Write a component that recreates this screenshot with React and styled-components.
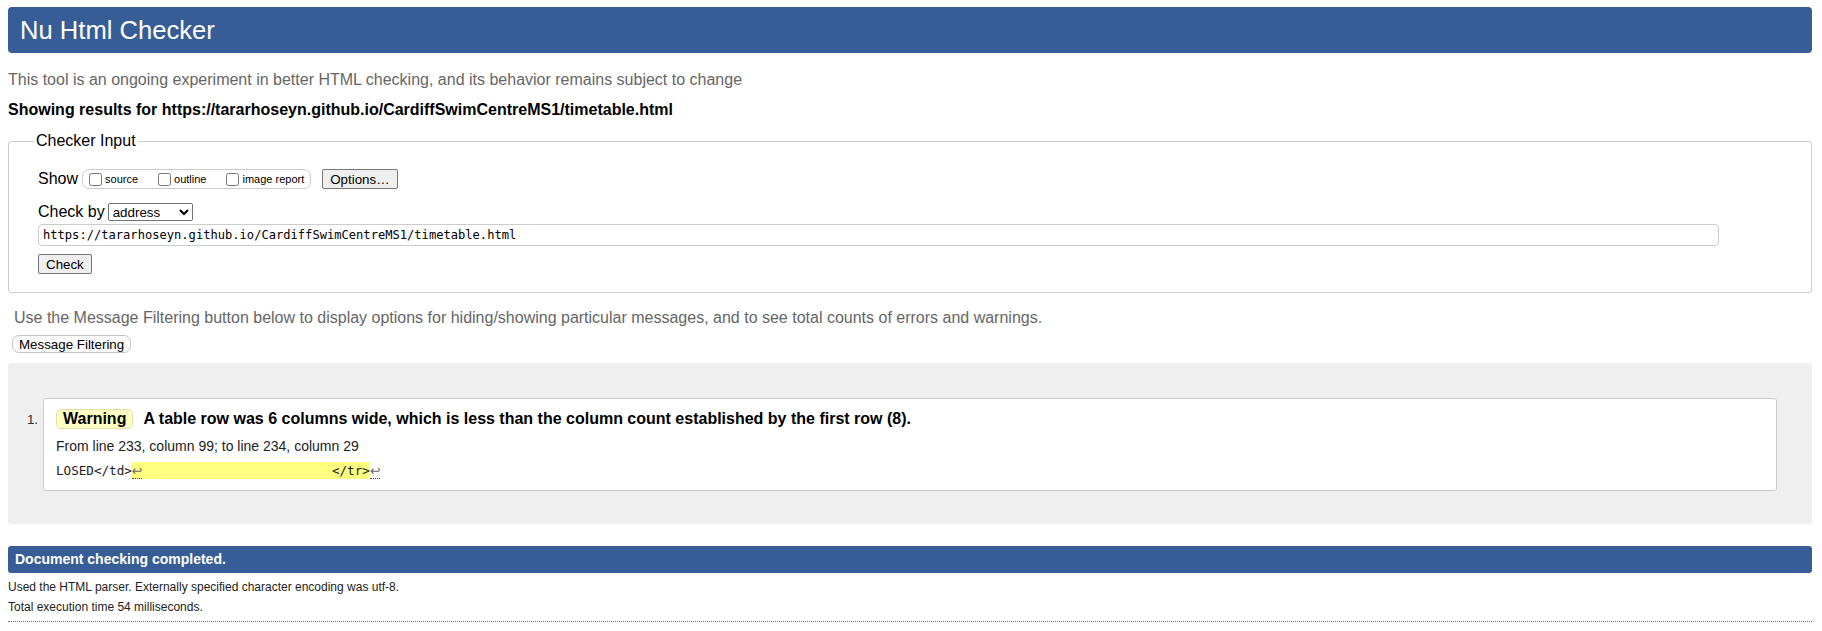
import React from 'react';
import styled, { createGlobalStyle } from 'styled-components';

const GlobalStyle = createGlobalStyle`
  html, body {
    margin: 0;
    padding: 0;
    background: #fff;
  }
  body {
    font-family: "Liberation Sans", Arial, sans-serif;
    color: #000;
  }
`;

const Page = styled.div`
  padding: 7px 10px 0 8px;
`;

const Header = styled.h1`
  margin: 0;
  height: 46px;
  line-height: 46px;
  padding-left: 12px;
  background: #365d95;
  border-radius: 4px;
  color: #fff;
  font-size: 25.6px;
  font-weight: normal;
`;

const Intro = styled.p`
  margin: 17px 0 0;
  line-height: 20px;
  font-size: 16px;
  color: #666;
`;

const Showing = styled.p`
  margin: 10px 0 0;
  line-height: 20px;
  font-size: 16px;
  font-weight: bold;
`;

const Fieldset = styled.fieldset`
  margin: 11px 0 0;
  padding: 18px 29px 18px 29px;
  min-width: 0;
  border: 1px solid #ccc;
  border-radius: 3px;
`;

const Legend = styled.legend`
  margin-left: -4px;
  padding: 0 2px;
  font-size: 16px;
  line-height: 20px;
`;

const Row = styled.div`
  display: flex;
  align-items: center;
  height: ${p => p.h}px;
  margin-top: ${p => p.top || 0}px;
  font-size: 16px;
  line-height: 20px;
`;

const ShowGroup = styled.span`
  display: inline-flex;
  align-items: center;
  gap: 20px;
  height: 18px;
  margin-left: 4px;
  padding: 0 6px;
  border: 1px solid #ccc;
  border-radius: 7px;
`;

const Option = styled.label`
  display: inline-flex;
  align-items: center;
  font-size: 11px;
  line-height: 13px;

  input {
    width: 13px;
    height: 13px;
    margin: 0 3px 0 0;
  }
`;

const Button = styled.button`
  height: 20px;
  padding: 0 ${p => p.pad || 7}px;
  margin-left: ${p => p.left || 0}px;
  font-family: "Liberation Sans", Arial, sans-serif;
  font-size: 13.33px;
  color: #000;
  background: #efefef;
  border: 1px solid #767676;
  border-radius: 2px;
`;

const Select = styled.select`
  width: 85px;
  height: 18px;
  margin-left: 3px;
  font-family: "Liberation Sans", Arial, sans-serif;
  font-size: 13.33px;
`;

const UrlInput = styled.input`
  box-sizing: border-box;
  width: 96.4%;
  height: 22px;
  padding: 0 4px;
  border: 1px solid #ccc;
  border-radius: 4px;
  font-family: "DejaVu Sans Mono", "Liberation Mono", monospace;
  font-size: 12.1px;
  color: #000;
`;

const FilterNote = styled.p`
  margin: 15px 0 0 6px;
  line-height: 20px;
  font-size: 16px;
  color: #666;
`;

const FilterButton = styled.button`
  display: block;
  height: 18px;
  margin: 7px 0 0 4px;
  padding: 0 6px;
  font-family: "Liberation Sans", Arial, sans-serif;
  font-size: 13.33px;
  color: #000;
  background: #fcfcfc;
  border: 1px solid #c4c4c4;
  border-radius: 7px;
`;

const Results = styled.ol`
  margin: 10px 0 0;
  padding: 35px 35px 33px 0;
  list-style: none;
  background: #efefef;
  border-radius: 3px;
`;

const Item = styled.li`
  display: flex;
  align-items: baseline;
`;

const Marker = styled.span`
  flex-shrink: 0;
  box-sizing: border-box;
  width: 35px;
  padding-right: 5px;
  text-align: right;
  font-size: 13.33px;
  color: #333;
`;

const Card = styled.div`
  flex: 1;
  padding: 10px 12px 11px;
  background: #fff;
  border: 1px solid #ccc;
  border-radius: 3px;
`;

const Title = styled.p`
  margin: 0;
  font-size: 16px;
  line-height: 20px;
  font-weight: bold;
`;

const Pill = styled.strong`
  display: inline-block;
  margin-right: 10px;
  padding: 0 6px;
  line-height: 18px;
  background: #ffffc4;
  border: 1px solid #e2e2a6;
  border-radius: 5px;
`;

const Location = styled.p`
  margin: 8px 0 0;
  font-size: 14px;
  line-height: 18px;
  color: #222;
`;

const Extract = styled.p`
  margin: 8px 0 0;
  font-family: "DejaVu Sans Mono", "Liberation Mono", monospace;
  font-size: 12.6px;
  line-height: 16px;
  white-space: pre;
  color: #222;
`;

const Mark = styled.mark`
  background: #ffff80;
  color: inherit;
  padding: 1px 0;
`;

const Newline = styled.span`
  font-family: "DejaVu Sans", sans-serif;
  color: #666;
  border-bottom: 1px dotted #444;
`;

const DoneBar = styled.div`
  margin-top: 22px;
  height: 27px;
  line-height: 27px;
  padding-left: 7px;
  background: #365d95;
  border-radius: 3px;
  color: #fff;
  font-size: 14px;
  font-weight: bold;
`;

const Detail = styled.p`
  margin: ${p => p.top}px 0 0;
  font-size: 12px;
  line-height: 14px;
  color: #222;
`;

const Rule = styled.div`
  margin-top: 7px;
  border-top: 1px dotted #777;
`;

const url = 'https://tararhoseyn.github.io/CardiffSwimCentreMS1/timetable.html';

export default function App() {
  return (
    <Page>
      <GlobalStyle />
      <Header>Nu Html Checker</Header>
      <Intro>This tool is an ongoing experiment in better HTML checking, and its behavior remains subject to change</Intro>
      <Showing>Showing results for {url}</Showing>

      <Fieldset>
        <Legend>Checker Input</Legend>
        <Row h={20}>
          Show
          <ShowGroup>
            <Option><input type="checkbox" />source</Option>
            <Option><input type="checkbox" />outline</Option>
            <Option><input type="checkbox" />image report</Option>
          </ShowGroup>
          <Button pad={7} left={11}>Options…</Button>
        </Row>
        <Row h={18} top={14}>
          Check by
          <Select defaultValue="address">
            <option value="address">address</option>
            <option value="upload">file upload</option>
            <option value="text">text input</option>
          </Select>
        </Row>
        <Row h={22} top={3}>
          <UrlInput defaultValue={url} />
        </Row>
        <Row h={20} top={8}>
          <Button>Check</Button>
        </Row>
      </Fieldset>

      <FilterNote>Use the Message Filtering button below to display options for hiding/showing particular messages, and to see total counts of errors and warnings.</FilterNote>
      <FilterButton>Message Filtering</FilterButton>

      <Results>
        <Item>
          <Marker>1.</Marker>
          <Card>
            <Title>
              <Pill>Warning</Pill>A table row was 6 columns wide, which is less than the column count established by the first row (8).
            </Title>
            <Location>From line 233, column 99; to line 234, column 29</Location>
            <Extract>
              LOSED&lt;/td&gt;<Mark><Newline>↩</Newline>{'                         '}&lt;/tr&gt;</Mark><Newline>↩</Newline>
            </Extract>
          </Card>
        </Item>
      </Results>

      <DoneBar>Document checking completed.</DoneBar>
      <Detail top={7}>Used the HTML parser. Externally specified character encoding was utf-8.</Detail>
      <Detail top={6}>Total execution time 54 milliseconds.</Detail>
      <Rule />
    </Page>
  );
}
